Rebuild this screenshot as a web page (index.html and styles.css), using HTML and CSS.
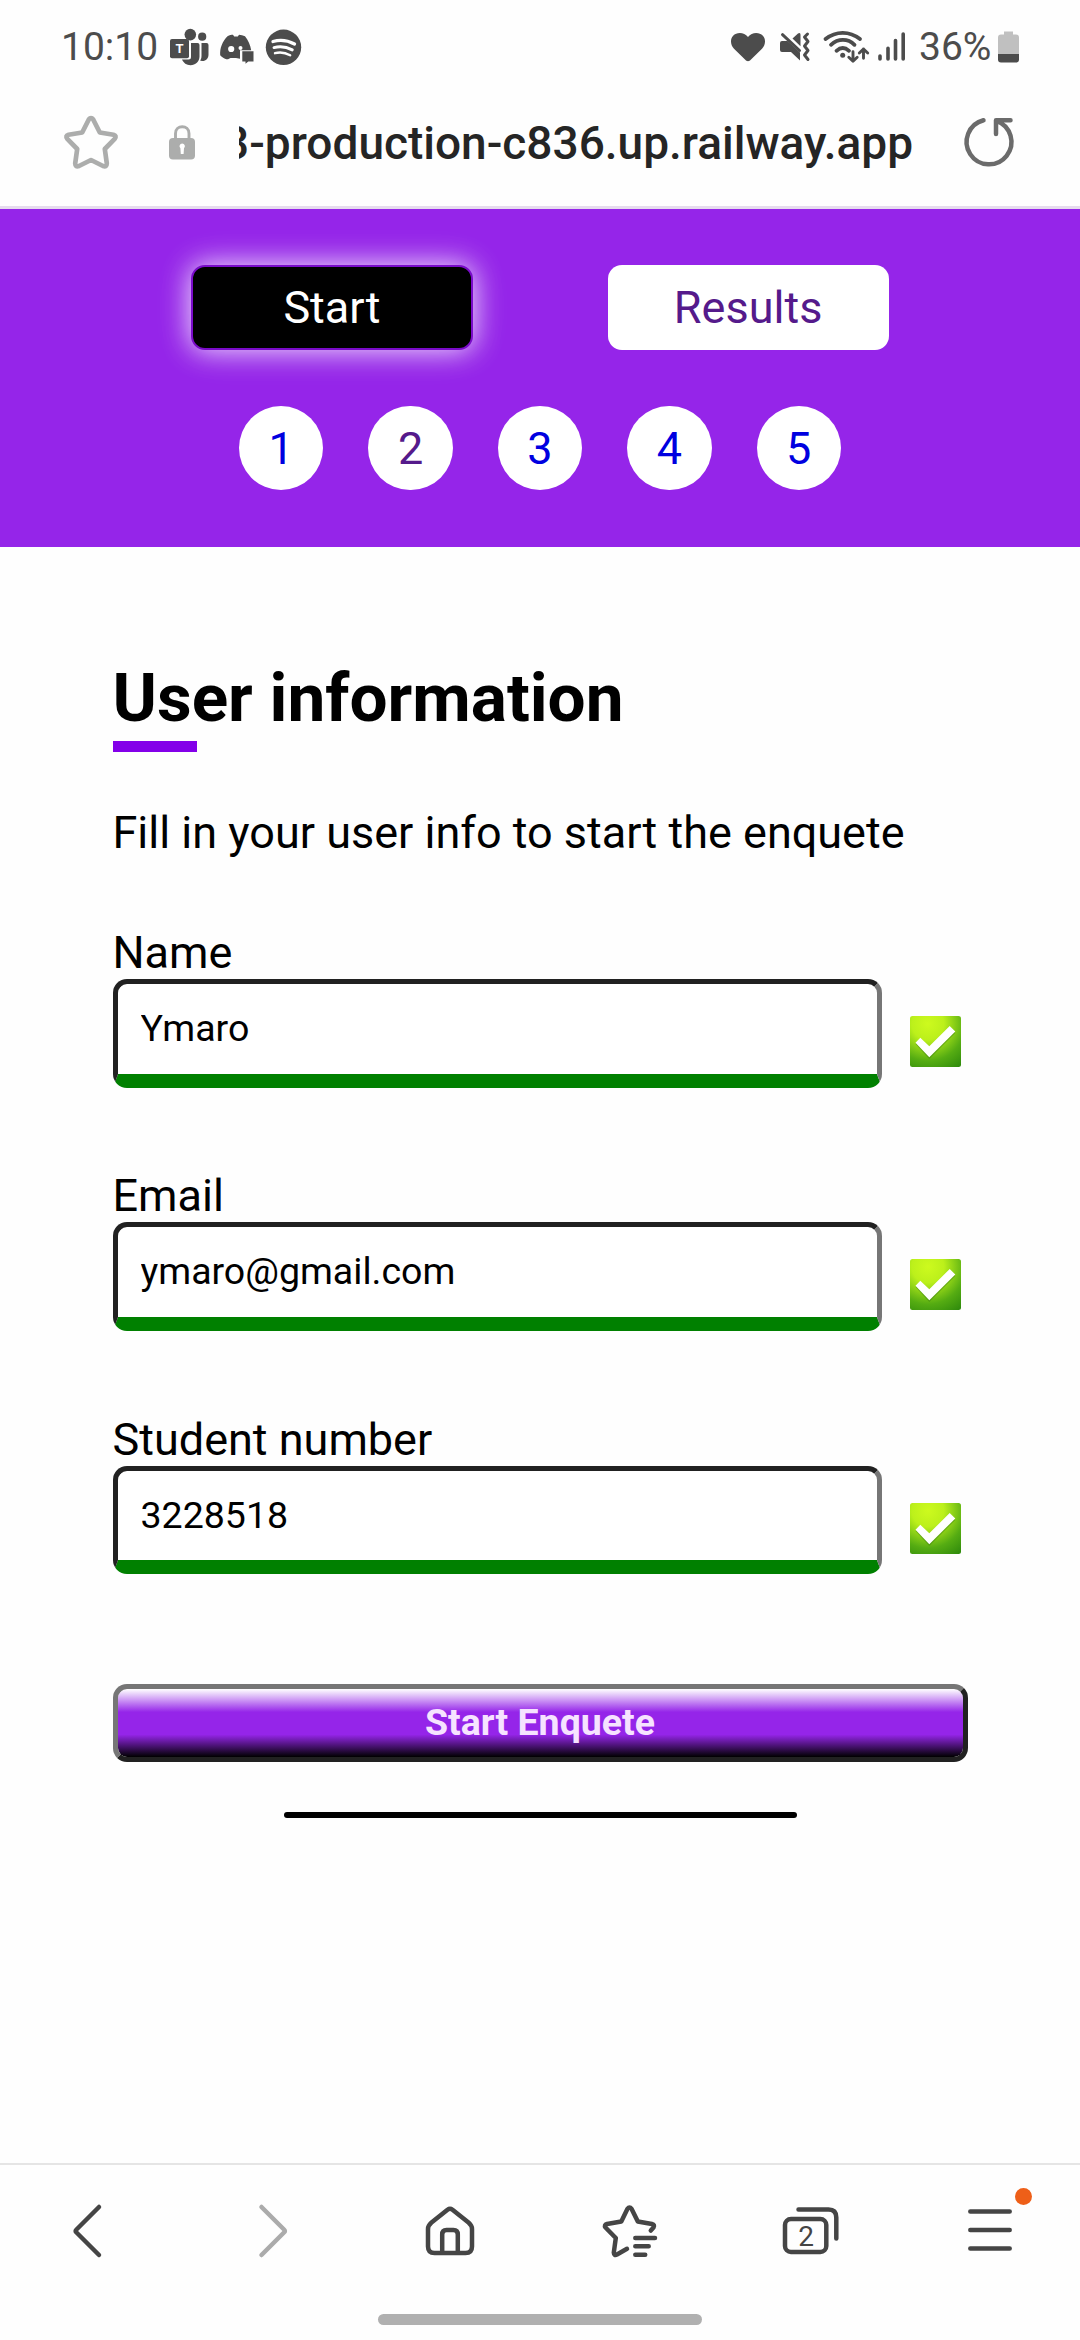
FILE: index.html
```html
<!DOCTYPE html>
<html lang="en">
<head>
<meta charset="utf-8">
<title>Enquete</title>
<link rel="stylesheet" href="styles.css">
</head>
<body>
<header class="status">
  <span class="status-time">10:10</span>
  <svg class="status-left" width="140" height="60" viewBox="165 15 140 60" fill="#4c4c4c">
    <circle cx="190.3" cy="34.6" r="5.8"/>
    <circle cx="202.2" cy="36.7" r="4.1"/>
    <path d="M191 43h6.500a2 2 0 0 1 2 2v11.500c0 5-4 8.700-9 8.700-4 0-7-2.200-8.500-5.700h6.500a2.500 2.500 0 0 0 2.500-2.500zM201.500 43h5a2 2 0 0 1 2 2v9.500c0 4-2.500 6.500-6 6.500l-2.300-.2c.8-1.500 1.300-3 1.300-5z"/>
    <rect x="170" y="39" width="19" height="19.200" rx="2"/>
    <text x="179.500" y="53.300" font-family="Roboto" font-weight="700" font-size="13" fill="#fff" text-anchor="middle">T</text>
    <path d="M227.500 36.200c2-1 4-1.300 5.500-1.400l1.200 1.600h3.600l1.200-1.600c2 .1 4 .5 6 1.400 3 3.500 5.500 9 6.200 14H240v8.500l-4-.8h-5.500l-2.500 1.300-1.800 0c-2.500-1-4.500-2.300-6-4-.5-7 2-13.500 7.300-19z"/>
    <circle cx="231.200" cy="49" r="3.100" fill="#fff"/><circle cx="240.500" cy="48" r="2" fill="#fff"/>
    <path d="M242.300 51.200h11.200v10.300h-5.200l-2.800 2.300v-2.300h-3.200z"/>
    <circle cx="283.500" cy="47.300" r="17.700"/>
    <g fill="none" stroke="#fff" stroke-linecap="round">
      <path stroke-width="3.300" d="M273 41.500c7-2 15-1 21.500 2.500"/>
      <path stroke-width="2.900" d="M274 47.600c6-1.700 12.500-.8 18.300 2.300"/>
      <path stroke-width="2.400" d="M275 53.200c5-1.300 10.300-.6 15.200 2"/>
    </g>
  </svg>
  <svg class="status-right" width="185" height="60" viewBox="728 15 185 60" fill="none" stroke="#4c4c4c" stroke-linecap="round" stroke-linejoin="round">
    <path fill="#4c4c4c" stroke="none" d="M748 61.300c-1.200 0-2-.8-3-1.700l-11-10.800c-4-4.500-3.700-9.800-.9-13 3.700-4 11-3.800 14.900 1.200 3.900-5 11.200-5.200 14.900-1.200 2.800 3.200 3.100 8.500-.9 13l-11 10.800c-1 .9-1.800 1.700-3 1.700z"/>
    <path fill="#4c4c4c" stroke="none" d="M782 41h5.500L800 52.500v8L791 52h-9q-2 0-2-2v-7q0-2 2-2zM792.500 38.500l5.500-5q2.500-1.300 2.500 1.200v11.500z"/>
    <path stroke-width="3" d="M782.500 34.700L799.500 50.500M807.500 34l-3 3 3.500 4.500-3.500 4.500 3.500 4.500-3.500 4.500 3.500 4.500"/>
    <path stroke-width="3.800" d="M825.500 39c10.500-8.300 24-8.300 34.500 0M831 44.800c7-6.500 17-6.500 23.500 0M836.500 50.800c4-3.700 8.500-3.700 12.500 0"/>
    <circle cx="842.700" cy="55.300" r="2.500" fill="#4c4c4c" stroke="none"/>
    <path stroke-width="2.900" d="M853 51.800v9.500M848.800 57.300l4.200 4 4.200-4M863.500 58.300v-9.300M859.300 53l4.200-4 4.200 4"/>
    <path stroke-width="3.600" d="M880 56v3M888 48.300v10.700M895.500 40.500v18.500M903.200 34v25"/>
  </svg>
  <span class="status-pct">36%</span>
  <svg class="battery" width="22" height="60" viewBox="998 15 22 60">
    <path fill="#c0c0c0" d="M1004 31.500h9v3h3q3 0 3 3v17h-21v-17q0-3 3-3h3z"/>
    <path fill="#4c4c4c" d="M998 54h21v5.500q0 3-3 3h-15q-3 0-3-3z"/>
  </svg>
</header>

<div class="address">
  <svg width="140" height="70" viewBox="60 107 140 70" fill="none" stroke="#acadac">
    <path stroke-width="4.700" stroke-linejoin="round" d="M88.800 119.500Q91 116.500 93.200 119.500L99.800 132.500 113.500 134.800Q117 135.800 114.700 138.800L104.800 149 106.800 163.300Q106.800 167.300 103 166L91 160 79 166Q75.200 167.300 75.200 163.300L77.200 149 67.300 138.800Q65 135.800 68.500 134.800L82.200 132.500Z"/>
    <path stroke-width="2.900" d="M175.500 140v-6.500c0-9 13.500-9 13.500 0v6.500"/>
    <rect x="169" y="138" width="26" height="21.500" rx="4" fill="#acadac" stroke="none"/>
    <path fill="#fff" stroke="none" d="M182.200 143.500a2.700 2.700 0 0 1 1.800 4.700l-.4 5.800h-2.800l-.4-5.800a2.700 2.700 0 0 1 1.800-4.700z"/>
  </svg>
  <div class="url"><span>3-production-c836.up.railway.app</span></div>
  <svg width="60" height="70" viewBox="959 107 60 70" fill="none" stroke="#6b6b6b" stroke-width="4.500" stroke-linecap="round" stroke-linejoin="round">
    <path d="M983.500 120.200A22.400 22.400 0 1 0 996.500 120.800M1010.500 120.200H996V134"/>
  </svg>
</div>

<nav class="nav">
  <div class="tabs">
    <a class="tab tab-active">Start</a>
    <a class="tab">Results</a>
  </div>
  <div class="steps">
    <a class="step">1</a>
    <a class="step step-visited">2</a>
    <a class="step">3</a>
    <a class="step">4</a>
    <a class="step">5</a>
  </div>
</nav>

<main class="content">
  <svg class="defs" width="0" height="0">
    <radialGradient id="green" cx=".35" cy=".15" r="1.050">
      <stop offset="0" stop-color="#cdfa1e"/><stop offset=".3" stop-color="#bcf01b"/><stop offset=".7" stop-color="#55ac12"/><stop offset="1" stop-color="#2f8a0c"/>
    </radialGradient>
    <symbol id="ok" viewBox="0 0 51 51">
      <rect width="51" height="51" rx="2.500" fill="url(#green)"/>
      <path d="M5.500 28L10.300 23 19.300 31.500 39.700 11.500 45.300 17 19.300 43Z" fill="#397f10" opacity=".45"/>
      <path d="M5.500 26.700L10.300 21.700 19.300 30.300 39.700 10 45.300 15.400 19.300 41.300Z" fill="#fff"/>
    </symbol>
  </svg>
  <h1 class="title">User information</h1>
  <div class="accent"></div>
  <p class="intro">Fill in your user info to start the enquete</p>
  <form class="form">
    <div class="field">
      <label for="name">Name</label>
      <div class="row"><input id="name" value="Ymaro"><svg width="51" height="51"><use href="#ok"/></svg></div>
    </div>
    <div class="field">
      <label for="email">Email</label>
      <div class="row"><input id="email" value="ymaro@gmail.com"><svg width="51" height="51"><use href="#ok"/></svg></div>
    </div>
    <div class="field">
      <label for="number">Student number</label>
      <div class="row"><input id="number" value="3228518"><svg width="51" height="51"><use href="#ok"/></svg></div>
    </div>
    <button class="submit" type="button">Start Enquete</button>
  </form>
  <div class="rule"></div>
</main>

<footer class="toolbar">
  <div class="tools">
    <svg viewBox="0 2165 180 130"><path d="M99 2207L76.500 2229.500Q75 2231 76.500 2232.500L99 2255"/></svg>
    <svg class="disabled" viewBox="180 2165 180 130"><path d="M261.500 2207L284 2229.500Q285.500 2231 284 2232.500L261.500 2255"/></svg>
    <svg viewBox="360 2165 180 130"><path d="M447.500 2209.700Q450 2207.800 452.500 2209.700L468.500 2222.500Q472 2225.500 472 2229V2246.500Q472 2253 465.500 2253H434.500Q428 2253 428 2246.500V2229Q428 2225.500 431.500 2222.500ZM442.200 2253V2234.500Q442.200 2230 446.500 2230H453.500Q457.800 2230 457.800 2234.500V2253"/></svg>
    <svg viewBox="540 2165 180 130"><path d="M650.800 2230.500L653.500 2227.500Q655 2224.600 652 2224L637.800 2221.500 631.500 2208.800Q629.500 2206 627.500 2208.800L621.300 2221.500 607 2224Q603.800 2225 605.500 2227.500L615.800 2238 613.800 2252.500Q614 2256 617 2254.500L627 2248.800M635.300 2238H655M635.300 2246.300H648.700M635.300 2254.700H645.200"/></svg>
    <svg viewBox="720 2165 180 130"><rect x="785" y="2219" width="41.300" height="33" rx="6"/><path d="M798.500 2209.500H828.500Q836.300 2209.500 836.300 2217.500V2238.500"/><text class="count" x="806" y="2246">2</text></svg>
    <svg viewBox="900 2165 180 130"><path d="M970.300 2211.500H1009.700M970.300 2230H1009.700M970.300 2248.500H1009.700"/><circle class="dot" cx="1023.500" cy="2196.500" r="8.500"/></svg>
  </div>
  <div class="handle"></div>
</footer>
</body>
</html>
```
FILE: styles.css
```css
* { box-sizing: border-box; }
body {
  margin: 0;
  width: 1080px;
  height: 2340px;
  display: flex;
  flex-direction: column;
  overflow: hidden;
  background: #fefefe;
  color: #000;
  font-family: Roboto, sans-serif;
  font-size: 45px;
}
svg { flex: none; display: block; }

.status {
  height: 90px;
  padding: 0 60px 0 61px;
  display: flex;
  align-items: center;
  color: #4c4c4c;
  font-size: 39px;
  line-height: 60px;
}
.status-time { width: 104px; padding-top: 3px; }
.status-right { margin-left: auto; }
.status-pct { width: 78px; padding: 3px 0 0 6px; }
.status-time, .status-pct { white-space: nowrap; }
.battery { margin-left: 7px; }

.address {
  height: 119px;
  padding: 0 61px 12px 60px;
  display: flex;
  align-items: center;
  border-bottom: 3px solid #e6dbee;
}
.url {
  width: 676px;
  margin-left: 39px;
  margin-right: 44px;
  padding: 2px 2px 0 0;
  display: flex;
  justify-content: flex-end;
  overflow: hidden;
  white-space: nowrap;
  font-size: 46px;
  font-weight: 500;
  color: #252525;
}

.nav {
  height: 337.5px;
  padding: 56.25px 0;
  display: flex;
  flex-direction: column;
  align-items: center;
  gap: 56.25px;
  background: #9525e9;
}
.tabs { display: flex; gap: 135px; }
.tab {
  width: 281.25px;
  height: 84.375px;
  display: flex;
  align-items: center;
  justify-content: center;
  border-radius: 14px;
  background: #fff;
  color: #551a8b;
}
.tab-active {
  background: #000;
  color: #fff;
  border: 2px solid #7a0bc9;
  box-shadow: 0 0 42px rgba(255, 255, 255, .2), 0 0 28px rgba(255, 255, 255, .8);
}
.steps { display: flex; gap: 45px; }
.step {
  width: 84.375px;
  height: 84.375px;
  display: flex;
  align-items: center;
  justify-content: center;
  border-radius: 50%;
  background: #fff;
  color: #0000e0;
}
.step-visited { color: #551a8b; }

.content { padding: 111.500px 112.500px 0; flex: 1; }
.defs { position: absolute; }
.title { margin: 0; font-size: 67.500px; line-height: 80px; font-weight: 700; }
.accent { width: 84.375px; height: 11px; margin-top: 3px; background: #8300e9; }
.intro { margin: 54px 0 67.200px; line-height: 53px; }
.form { display: flex; flex-direction: column; }
.field { height: 243.280px; }
.field label { display: block; line-height: 53px; }
.row { display: flex; gap: 28px; align-items: flex-start; }
.row svg { margin-top: 37px; }
.row input {
  width: 769px;
  height: 108.350px;
  padding: 22px 22.500px 23.500px 23px;
  border: 5px solid #212121;
  border-right-color: #767676;
  border-bottom: 14px solid #008000;
  border-radius: 14px;
  background: #fff;
  color: #000;
  font: 37.500px Roboto, sans-serif;
}
.submit {
  height: 78px;
  margin-top: 28px;
  padding: 0 0 2px;
  border: 5px solid #767676;
  border-right-color: #212121;
  border-bottom-color: #212121;
  border-radius: 14px;
  background: linear-gradient(#fff, #9525e9 34%, #9525e9 67%, #000) padding-box;
  color: #f6e3ff;
  font: 700 37.500px/44px Roboto, sans-serif;
}
.rule { width: 60%; height: 6px; margin: 50px auto 0; border-radius: 3px; background: #000; }

.toolbar {
  height: 177px;
  border-top: 2px solid #e5e5e5;
  display: flex;
  flex-direction: column;
  align-items: center;
}
.tools { width: 1080px; display: grid; grid-template-columns: repeat(6, 180px); }
.tools svg {
  width: 180px;
  height: 130px;
  fill: none;
  stroke: #454545;
  stroke-width: 4.500px;
  stroke-linecap: round;
  stroke-linejoin: round;
}
.tools .disabled { stroke: #ababab; }
.tools .count { fill: #454545; stroke: none; font-size: 28px; text-anchor: middle; }
.tools .dot { fill: #ee5f18; stroke: none; }
.handle { width: 324px; height: 11px; margin-top: 19px; border-radius: 6px; background: #b0b0b0; }
```
